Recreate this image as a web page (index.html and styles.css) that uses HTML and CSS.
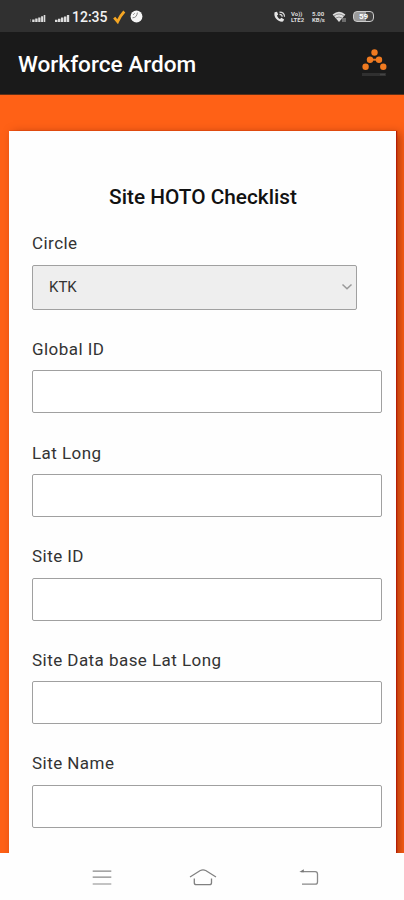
FILE: index.html
```html
<!DOCTYPE html>
<html lang="en">
<head>
<meta charset="utf-8">
<title>Workforce Ardom</title>
<link rel="stylesheet" href="styles.css">
</head>
<body>
<div class="status">
  <div class="status-left">
    <svg class="signal" width="16" height="9" viewBox="0 0 16 9"><path d="M0 5h1v3H0z" fill="#666"/><path d="M2.2 5.6h2.4V8H2.2zM5.2 4.6h2.4V8H5.2zM8.2 3.4h2.3V8H8.2zM11.1 2.2h2V8h-2zM13.7 1h1.6v7h-1.6z" fill="#ddd"/></svg>
    <svg class="signal" width="15" height="9" viewBox="0 0 15 9"><path d="M0 5.8h2.5V8H0zM3 4.8h2.5V8H3zM6 3.6h2.4V8H6zM9 2.4h2.4V8H9zM11.9 1h2.3v7h-2.3z" fill="#ddd"/></svg>
    <span class="clock">12:35</span>
    <svg class="tick" width="13" height="14" viewBox="0 0 13 14"><path d="M1.2 7.6 4.6 11.6Q7 6 11.3 1.5" fill="none" stroke="#f5a623" stroke-width="2.8"/></svg>
    <svg width="13" height="13" viewBox="0 0 13 13"><circle cx="6.5" cy="6.5" r="5.9" fill="#f5f5f5"/><path d="M2.5 7.8C5.5 7.8 7 6 7.4 2.6M3.2 4.8l1.5-1.5" fill="none" stroke="#777" stroke-width=".9"/></svg>
  </div>
  <div class="status-right">
    <svg width="13" height="12" viewBox="0 0 13 12"><path d="M1.6 1.2C.2 5.8 4.6 11.2 10 10.6l1.2-2.2-2.8-1.6-1.4 1.3C5.4 7.3 4.4 6 4 4.5l1.2-1L4 .8z" fill="#e5e5e5"/><path d="M6.5 1.2c3 0 5 1.8 5 4.6M6.5 3.4c1.7 0 2.7.9 2.7 2.4" fill="none" stroke="#ddd" stroke-width="1.2"/></svg>
    <span class="tiny"><span>Vo))</span><span>LTE2</span></span>
    <span class="tiny speed"><span>5.00</span><span>KB/s</span></span>
    <svg width="15" height="12" viewBox="0 0 15 12"><path d="M.6 3.5Q7-1.8 13.4 3.5L7 11z" fill="#ddd"/><path d="M2 5Q7 1 12 5M4 7q3-2 6 0" fill="none" stroke="#555" stroke-width=".6"/><path d="M11 11V7M13 11V7" stroke="#aaa"/></svg>
    <span class="battery">59</span>
  </div>
</div>
<header class="appbar">
  <h1>Workforce Ardom</h1>
  <svg width="28" height="30" viewBox="0 0 28 30"><path d="M10 11.7h9" stroke="#e87722" stroke-width="2"/><g fill="#f07a20"><circle cx="14.5" cy="4.5" r="3.2"/><circle cx="10" cy="11.7" r="3.2"/><circle cx="19" cy="11.7" r="3.2"/><circle cx="5.6" cy="18.8" r="3.2"/><circle cx="23.3" cy="18.8" r="3.2"/></g><path d="M2 26.5h24" stroke="#303030" stroke-width="3"/><path d="M20 26.5h5" stroke="#444" stroke-width="1.5"/></svg>
</header>
<main class="page">
  <form class="card">
    <h2>Site HOTO Checklist</h2>
    <div class="field"><label for="circle">Circle</label>
      <div class="select" id="circle"><span>KTK</span><svg width="12" height="8" viewBox="0 0 12 8"><path d="M1.5 1.5 6 5.8l4.5-4.3" fill="none" stroke="#999" stroke-width="1.5"/></svg></div></div>
    <div class="field"><label for="gid">Global ID</label><input id="gid" type="text"></div>
    <div class="field"><label for="ll">Lat Long</label><input id="ll" type="text"></div>
    <div class="field"><label for="sid">Site ID</label><input id="sid" type="text"></div>
    <div class="field"><label for="sdb">Site Data base Lat Long</label><input id="sdb" type="text"></div>
    <div class="field"><label for="sn">Site Name</label><input id="sn" type="text"></div>
  </form>
</main>
<nav class="nav">
  <svg width="20" height="18" viewBox="0 0 20 18"><path d="M.7 2.2h18.6M.7 8.2h18.6M.7 15h18.6" stroke="#888" stroke-width="1.2"/></svg>
  <svg class="home" width="28" height="18" viewBox="0 0 28 18"><path d="M1 8 11.3 1.5Q14 .2 16.7 1.5L27 8M5.3 9.5v4.2q0 2 2 2h13.2q2 0 2-2V9.5" fill="none" stroke="#808080" stroke-width="1.3"/></svg>
  <svg width="20" height="18" viewBox="0 0 20 18"><path d="M2 2.6h14.2q2.3 0 2.3 2.3v8q0 2.3-2.3 2.3H3" fill="none" stroke="#888" stroke-width="1.3"/><path d="M.3 3 4.8.2v3z" fill="#777"/></svg>
</nav>
</body>
</html>
```
FILE: styles.css
```css
* { box-sizing: border-box; }
body {
  margin: 0;
  width: 404px;
  height: 900px;
  overflow: hidden;
  display: flex;
  flex-direction: column;
  background: #fefefe;
  font-family: Roboto, "Liberation Sans", sans-serif;
}
svg { display: block; flex: none; }
.status {
  height: 32px;
  flex: none;
  display: flex;
  justify-content: space-between;
  align-items: center;
  padding: 1px 30px 0 29px;
  background: #303030;
  color: #f2f2f2;
}
.status-left, .status-right { display: flex; align-items: center; }
.signal { margin: 4px 10px 0 1px; }
.signal + .signal { margin: 4px 2px 0 -1px; }
.clock { font-size: 14px; font-weight: 500; width: 36px; }
.tick { margin: 0 4px 0 5px; }
.status-right { gap: 5px; }
.tiny {
  display: flex;
  flex-direction: column;
  width: 15px;
  font-size: 6px;
  line-height: 6px;
  font-weight: 700;
  color: #ddd;
}
.speed { margin-left: 1px; }
.battery {
  width: 21px;
  height: 11px;
  margin-left: 1px;
  border: 1.5px solid #ccc;
  border-radius: 4px;
  background: linear-gradient(90deg, #999 65%, #444 65%);
  color: #fff;
  font-size: 8px;
  font-weight: 700;
  line-height: 9px;
  text-align: center;
}
.appbar {
  height: 63px;
  flex: none;
  display: flex;
  align-items: center;
  justify-content: space-between;
  padding: 0 16px 0 18px;
  background: #1a1a1a;
  border-bottom: 1px solid #603018;
}
h1 { margin: 3px 0 0; font-size: 22.6px; line-height: 28px; font-weight: 500; color: #fff; }
.page {
  height: 758px;
  flex: none;
  overflow: hidden;
  padding: 36px 8px 0 9px;
  background: #ff6116;
}
.card {
  height: 760px;
  padding: 51.4px 14px 0 23px;
  background: #fefefe;
  box-shadow: 1px 0 1px #b51d05, 4px 2px 9px rgba(100, 20, 0, .5);
}
h2 {
  margin: 0 0 18px -8px;
  font-size: 20.8px;
  line-height: 31px;
  font-weight: 500;
  text-align: center;
  color: #111;
}
.field { display: flex; flex-direction: column; margin-bottom: 27.2px; }
label { margin-bottom: 9.4px; font-size: 17px; line-height: 24px; color: #333; letter-spacing: .45px; }
input, .select {
  width: 350px;
  height: 43px;
  border: 1px solid #a0a0a0;
  border-radius: 2px;
  background: #fff;
}
.select {
  width: 325px;
  height: 45px;
  display: flex;
  align-items: center;
  justify-content: space-between;
  padding: 0 3px 0 16px;
  background: #eee;
  color: #333;
  font-size: 15px;
}
.nav {
  height: 47px;
  flex: none;
  display: flex;
  justify-content: space-between;
  align-items: center;
  padding: 2px 85px 0 92px;
}
.home { margin: 0 3px 0 -3px; }
```
